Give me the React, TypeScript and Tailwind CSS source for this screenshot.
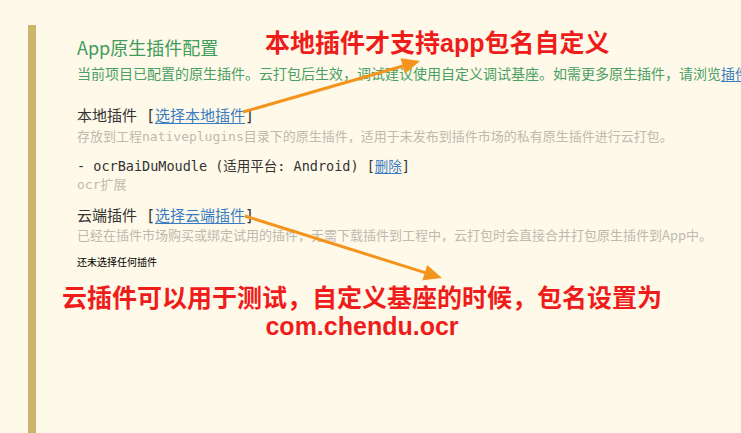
import React from "react";

function Link({ children }: { children: React.ReactNode }) {
	return <span className="text-[#3a7cc4] underline underline-offset-2 decoration-[#3a7cc4]">{children}</span>;
}

export default function App() {
	return (
		<div className="relative min-h-screen overflow-hidden bg-[#fef9e8]">
			<div className="pt-[25px] pl-[28px]">
				<div className="min-h-[408px] border-l-[8px] border-[#cfb46c] pl-[41px] pt-[12px]">
					{/* ===== Header ===== */}
					<h1 className="font-['Noto_Sans_CJK_SC',sans-serif] text-[18px] leading-[20px] text-[#3f9c5d]">
						App原生插件配置
					</h1>
					<p className="mt-[7px] whitespace-nowrap font-['Noto_Sans_CJK_SC',sans-serif] text-[14px] leading-[18px] text-[#4a9f64]">
						当前项目已配置的原生插件。云打包后生效，调试建议使用自定义调试基座。如需更多原生插件，请浏览<Link>插件市场</Link>
					</p>

					{/* ===== Local plugins ===== */}
					<div className="mt-[24px] whitespace-nowrap font-['DejaVu_Sans_Mono','Noto_Sans_CJK_SC',monospace] text-[15px] leading-[20px] text-[#333]">
						本地插件 [<Link>选择本地插件</Link>]
					</div>
					<p className="mt-[2px] whitespace-nowrap font-['DejaVu_Sans_Mono','Noto_Sans_CJK_SC',monospace] text-[13px] leading-[18px] text-[#bdbab0]">
						存放到工程nativeplugins目录下的原生插件，适用于未发布到插件市场的私有原生插件进行云打包。
					</p>
					<div className="mt-[10px] whitespace-nowrap font-['DejaVu_Sans_Mono','Noto_Sans_CJK_SC',monospace] text-[13.5px] leading-[20px] text-[#333]">
						- ocrBaiDuMoudle (适用平台: Android) [<Link>删除</Link>]
					</div>
					<p className="whitespace-nowrap font-['DejaVu_Sans_Mono','Noto_Sans_CJK_SC',monospace] text-[13px] leading-[18px] text-[#bdbab0]">
						ocr扩展
					</p>

					{/* ===== Cloud plugins ===== */}
					<div className="mt-[12px] whitespace-nowrap font-['DejaVu_Sans_Mono','Noto_Sans_CJK_SC',monospace] text-[15px] leading-[20px] text-[#333]">
						云端插件 [<Link>选择云端插件</Link>]
					</div>
					<p className="whitespace-nowrap font-['Noto_Sans_CJK_SC',sans-serif] text-[13px] leading-[18px] text-[#bdbab0]">
						已经在插件市场购买或绑定试用的插件，无需下载插件到工程中，云打包时会直接合并打包原生插件到App中。
					</p>
					<p className="mt-[11px] font-['Noto_Sans_CJK_SC',sans-serif] text-[10px] leading-[14px] text-black">
						还未选择任何插件
					</p>
				</div>
			</div>

			{/* ===== Annotations ===== */}
			<div className="absolute left-[265px] top-[28px] whitespace-nowrap font-['Liberation_Sans','Noto_Sans_CJK_SC',sans-serif] text-[25px] font-bold leading-[30px] text-[#ef1c1c]">
				本地插件才支持app包名自定义
			</div>
			<div className="absolute left-0 top-[284px] w-[724px] text-center font-['Liberation_Sans','Noto_Sans_CJK_SC',sans-serif] text-[25px] font-bold leading-[28px] text-[#ef1c1c]">
				<div>云插件可以用于测试，自定义基座的时候，包名设置为</div>
				<div>com.chendu.ocr</div>
			</div>
			<svg className="pointer-events-none absolute left-0 top-0" width="741" height="433">
				<line x1="243" y1="112" x2="403" y2="66" stroke="#f5941d" strokeWidth="3" />
				<polygon points="420,61 404.9,73.7 400.5,58.3" fill="#f5941d" />
				<line x1="245" y1="216" x2="425" y2="272.6" stroke="#f5941d" strokeWidth="3" />
				<polygon points="442,278 422.4,280.2 427.2,265" fill="#f5941d" />
			</svg>
		</div>
	);
}
